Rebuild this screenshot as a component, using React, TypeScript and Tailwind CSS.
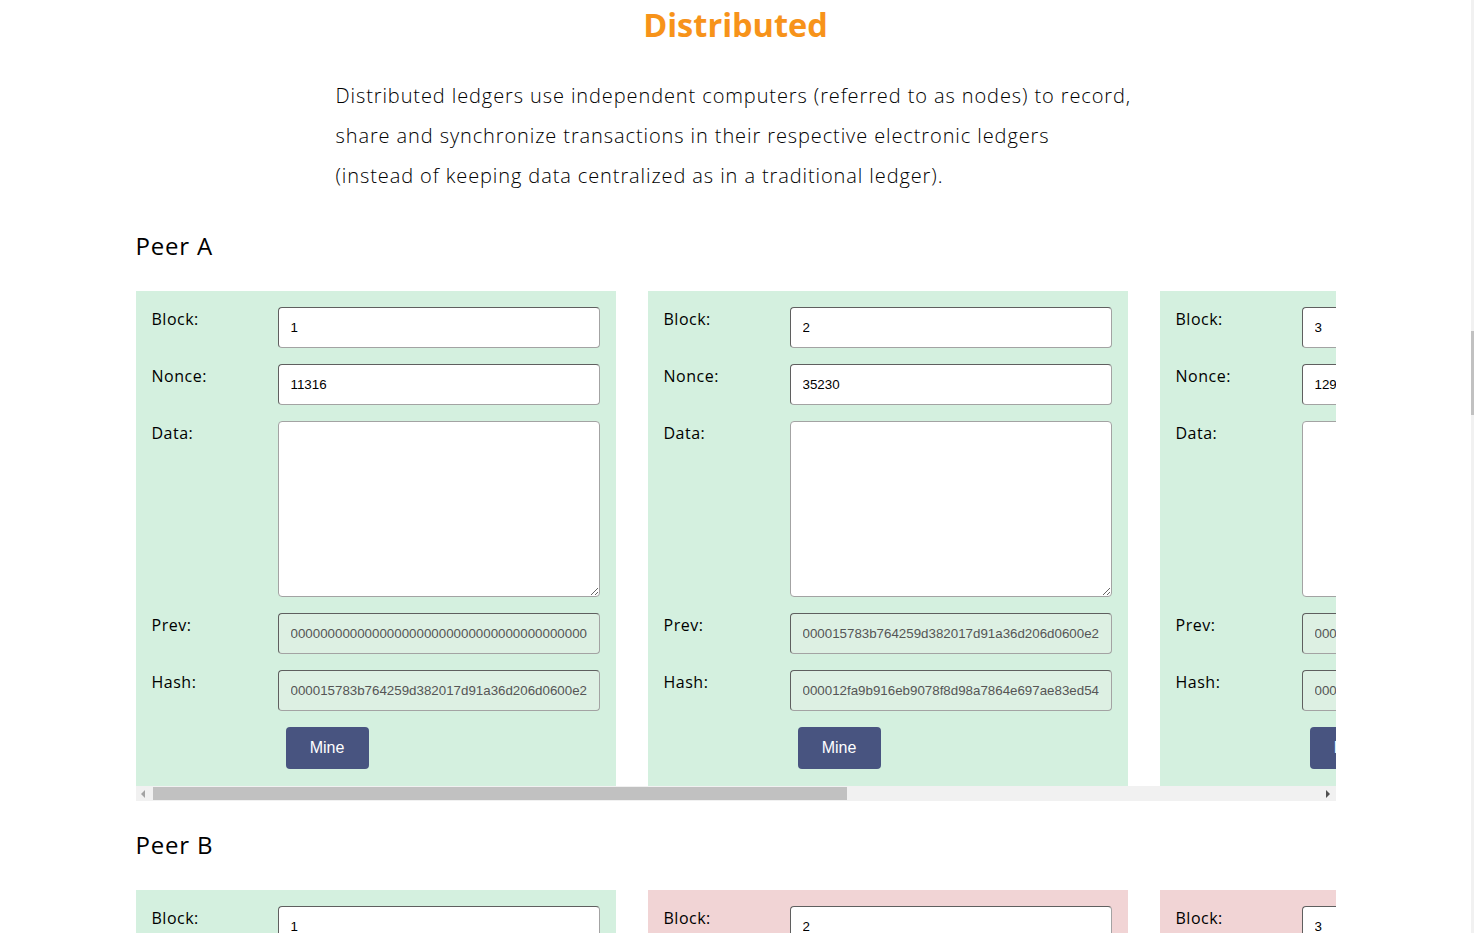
import React from "react";

type Block = {
  block: string;
  nonce: string;
  prev: string;
  hash: string;
  ok: boolean;
};

const PEER_A: Block[] = [
  { block: "1", nonce: "11316", prev: "0000000000000000000000000000000000000000000000", hash: "000015783b764259d382017d91a36d206d0600e2", ok: true },
  { block: "2", nonce: "35230", prev: "000015783b764259d382017d91a36d206d0600e2", hash: "000012fa9b916eb9078f8d98a7864e697ae83ed54", ok: true },
  { block: "3", nonce: "12937", prev: "000012fa9b916eb9078f8d98a7864e697ae83ed54", hash: "0000b9015ce2a08b61216ba5a0778545bf4ddd7ce", ok: true },
  { block: "4", nonce: "35990", prev: "0000b9015ce2a08b61216ba5a0778545bf4ddd7ce", hash: "0000ae8bbc96cf89c68be6e10a865cc47c6c48a9", ok: true },
];

const PEER_B: Block[] = [
  { block: "1", nonce: "11316", prev: "0000000000000000000000000000000000000000000000", hash: "000015783b764259d382017d91a36d206d0600e2", ok: true },
  { block: "2", nonce: "35230", prev: "000015783b764259d382017d91a36d206d0600e2", hash: "8a1c3f0e2b7d9e6a4f5c3b2a1d0e9f8c7b6a5d4e", ok: false },
  { block: "3", nonce: "12937", prev: "8a1c3f0e2b7d9e6a4f5c3b2a1d0e9f8c7b6a5d4e", hash: "5d2e9a8b7c6f1e0d3a4b5c6d7e8f9a0b1c2d3e4f", ok: false },
  { block: "4", nonce: "35990", prev: "5d2e9a8b7c6f1e0d3a4b5c6d7e8f9a0b1c2d3e4f", hash: "2f4a6c8e0b1d3f5a7c9e1b3d5f7a9c1e3b5d7f9a", ok: false },
];

function Label({ children }: { children: React.ReactNode }) {
  return (
    <div className="w-[126px] shrink-0 pt-0 text-[16px] leading-[24px] text-black font-['Open_Sans',sans-serif] tracking-[0.5px]">
      {children}
    </div>
  );
}

function Field({ value, readOnly }: { value: string; readOnly?: boolean }) {
  return (
    <input
      readOnly
      value={value}
      className={
        "w-full h-[41px] rounded-[4px] border border-t-[#5f5f5f] border-l-[#5f5f5f] border-r-[#a3a3a3] border-b-[#a3a3a3] px-[12px] text-[13.33px] font-['Liberation_Sans',Arial,sans-serif] outline-none " +
        (readOnly ? "bg-[#ddf0e3] text-[#555555]" : "bg-white text-black")
      }
    />
  );
}

function Card({ b }: { b: Block }) {
  return (
    <div className={"w-[480px] shrink-0 px-[16px] pt-[16px] pb-[17px] flex flex-col gap-[16px] " + (b.ok ? "bg-[#d4f0df]" : "bg-[#f1d4d5]")}>
      <div className="flex">
        <Label>Block:</Label>
        <Field value={b.block} />
      </div>
      <div className="flex">
        <Label>Nonce:</Label>
        <Field value={b.nonce} />
      </div>
      <div className="flex">
        <Label>Data:</Label>
        <textarea
          className="w-full h-[176px] rounded-[4px] border border-[#a3a3a3] bg-white px-[12px] py-[8px] text-[13.33px] font-['Liberation_Sans',Arial,sans-serif] outline-none"
          defaultValue=""
        />
      </div>
      <div className="flex">
        <Label>Prev:</Label>
        <Field value={b.prev} readOnly />
      </div>
      <div className="flex">
        <Label>Hash:</Label>
        <Field value={b.hash} readOnly />
      </div>
      <div className="flex">
        <div className="w-[134px] shrink-0" />
        <button className="w-[83px] h-[42px] rounded-[4px] bg-[#485480] text-white text-[16px] font-['Liberation_Sans',Arial,sans-serif]">
          Mine
        </button>
      </div>
    </div>
  );
}

function HScrollbar() {
  return (
    <div className="h-[15px] w-full bg-[#f1f1f1] flex items-center">
      <div className="w-[15px] h-full flex items-center justify-center">
        <div className="w-0 h-0 border-y-[4px] border-y-transparent border-r-[4px] border-r-[#a3a3a3]" />
      </div>
      <div className="w-[2px]" />
      <div className="w-[694px] h-[13px] bg-[#c1c1c1]" />
      <div className="flex-1" />
      <div className="w-[15px] h-full flex items-center justify-center">
        <div className="w-0 h-0 border-y-[4px] border-y-transparent border-l-[4px] border-l-[#505050]" />
      </div>
    </div>
  );
}

function Peer({ title, blocks, showScroll }: { title: string; blocks: Block[]; showScroll: boolean }) {
  return (
    <section>
      <h2 className="text-[24px] leading-[36px] font-medium text-black font-['Open_Sans',sans-serif] tracking-[0.8px] mb-[27px]">{title}</h2>
      <div className="w-[1200px] overflow-hidden">
        <div className="flex gap-[32px]">
          {blocks.map((b, i) => (
            <Card key={i} b={b} />
          ))}
        </div>
      </div>
      {showScroll && <HScrollbar />}
    </section>
  );
}

export default function App() {
  return (
    <div className="w-[1474px] h-[933px] overflow-hidden flex bg-white">
      <div className="w-[1471px] h-full overflow-hidden">
        <div className="w-[1200px] mx-auto">
          <h1 className="text-center text-[32.5px] leading-[50px] font-bold text-[#f7931a] font-['Open_Sans',sans-serif]">
            Distributed
          </h1>
          <p className="w-[800px] mx-auto mt-[26px] text-[20px] leading-[40px] font-light tracking-[0.9px] text-black font-['Open_Sans',sans-serif] whitespace-nowrap">
            Distributed ledgers use independent computers (referred to as nodes) to record,
            <br />
            share and synchronize transactions in their respective electronic ledgers
            <br />
            (instead of keeping data centralized as in a traditional ledger).
          </p>
          <div className="mt-[32px]">
            <Peer title="Peer A" blocks={PEER_A} showScroll />
          </div>
          <div className="mt-[26px]">
            <Peer title="Peer B" blocks={PEER_B} showScroll />
          </div>
        </div>
      </div>
      <div className="w-[3px] h-full bg-[#f1f1f1] flex flex-col">
        <div className="h-[331px]" />
        <div className="h-[84px] bg-[#c1c1c1]" />
      </div>
    </div>
  );
}
